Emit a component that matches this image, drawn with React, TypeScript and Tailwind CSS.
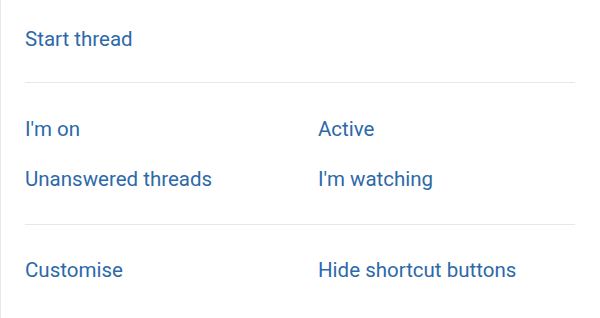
const linkClass = "block leading-[50px] text-[20.5px] text-[#2d69a8]";

export default function App() {
  return (
    <div className="min-h-screen bg-white border-l border-[#e6e8ec] pl-[24px] pr-[25px] pt-[14px] font-['Roboto',sans-serif]">
      {/* Start thread */}
      <a className={linkClass}>Start thread</a>

      <div className="mt-[18px] h-px bg-[#e8e8e8]" />

      {/* Filters */}
      <div className="grid grid-cols-[293px_1fr] pt-[21px]">
        <a className={linkClass}>I'm on</a>
        <a className={linkClass}>Active</a>
        <a className={linkClass}>Unanswered threads</a>
        <a className={linkClass}>I'm watching</a>
      </div>

      <div className="mt-[20px] h-px bg-[#e8e8e8]" />

      {/* Options */}
      <div className="grid grid-cols-[293px_1fr] pt-[20px]">
        <a className={linkClass}>Customise</a>
        <a className={linkClass}>Hide shortcut buttons</a>
      </div>
    </div>
  );
}
